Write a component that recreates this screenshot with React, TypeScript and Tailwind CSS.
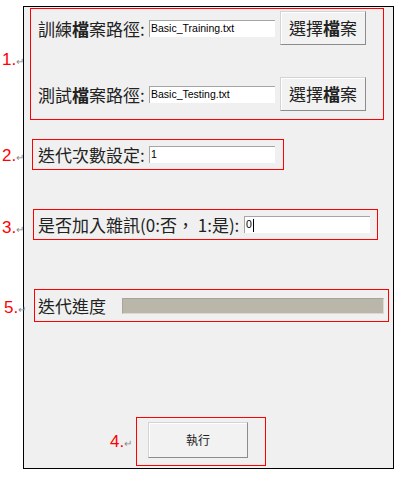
import React from 'react';

const cjk = "font-['Noto_Sans_CJK_TC','Noto_Sans_CJK_SC',sans-serif]";

function Note({ n, className }: { n: string; className: string }) {
  return (
    <div className={`absolute flex items-end font-['Liberation_Sans',sans-serif] ${className}`}>
      <span className="text-[17px] leading-none text-[#ff0000]">{n}</span>
      <span className="mb-[1px] text-[10px] leading-none text-[#8a8a8a]">↵</span>
    </div>
  );
}

function TextBox({ value, width, caret }: { value: string; width: string; caret?: boolean }) {
  return (
    <div
      className={`flex h-[17px] items-center border-t border-l border-[#a5a5a5] border-r-[#e8e8e8] border-b-[#e8e8e8] bg-white pl-[1px] font-['Liberation_Sans',sans-serif] text-[10.5px] text-black ${width}`}
    >
      <span>{value}</span>
      {caret && <span className="ml-[1px] h-[13px] w-[1px] bg-black" />}
    </div>
  );
}

function WinButton({ children, className }: { children: React.ReactNode; className: string }) {
  return (
    <button
      className={`flex items-center justify-center border border-[#d4d4d4] border-r-[#8c8c8c] border-b-[#8c8c8c] bg-[#f2f2f2] shadow-[inset_1px_1px_0_#ffffff] text-[#222] ${className}`}
    >
      {children}
    </button>
  );
}

export default function App() {
  return (
    <div className={`relative h-[479px] w-[402px] overflow-hidden bg-white ${cjk}`}>
      <div className="ml-[23px] mt-[6px] flex h-[463px] w-[371px] flex-col border border-black bg-[#f0f0f0]">
        {/* 1. 檔案路徑 */}
        <div className="ml-[6px] mt-[1px] flex h-[112px] w-[354px] flex-col border border-[#ff0000] pl-[7px] pt-[2px]">
          <div className="flex h-[34px] items-center">
            <span className="w-[111px] whitespace-nowrap text-[17px] leading-none text-[#222]">
              訓練<span className="font-semibold">檔</span>案路徑:
            </span>
            <TextBox value="Basic_Training.txt" width="w-[126px]" />
            <WinButton className="ml-[5px] h-[34px] w-[86px] text-[17px]">
              選擇<span className="font-semibold">檔</span>案
            </WinButton>
          </div>
          <div className="mt-[32px] flex h-[34px] items-center">
            <span className="w-[111px] whitespace-nowrap text-[17px] leading-none text-[#222]">
              測試<span className="font-semibold">檔</span>案路徑:
            </span>
            <TextBox value="Basic_Testing.txt" width="w-[126px]" />
            <WinButton className="ml-[5px] h-[34px] w-[86px] text-[17px]">
              選擇<span className="font-semibold">檔</span>案
            </WinButton>
          </div>
        </div>

        {/* 2. 迭代次數 */}
        <div className="ml-[8px] mt-[19px] flex h-[31px] w-[252px] items-center border border-[#ff0000] pl-[5px]">
          <span className="w-[111px] whitespace-nowrap text-[17px] leading-none text-[#222]">迭代次數設定:</span>
          <TextBox value="1" width="w-[126px]" />
        </div>

        {/* 3. 雜訊 */}
        <div className="ml-[9px] mt-[39px] flex h-[31px] w-[345px] items-center border border-[#ff0000] pl-[4px]">
          <span className="w-[206px] whitespace-nowrap text-[17px] leading-none text-[#222]">
            是否加入雜訊(0:否，&nbsp;1:是):
          </span>
          <TextBox value="0" width="w-[126px]" caret />
        </div>

        {/* 5. 進度 */}
        <div className="ml-[10px] mt-[49px] flex h-[33px] w-[355px] items-center border border-[#ff0000] pl-[3px]">
          <span className="w-[84px] whitespace-nowrap text-[17px] leading-none text-[#222]">迭代進度</span>
          <div className="h-[16px] w-[262px] border border-[#a8a498] border-r-[#dcd9d0] border-b-[#dcd9d0] bg-[#bab6aa]" />
        </div>

        {/* 4. 執行 */}
        <div className="ml-[112px] mt-[95px] h-[49px] w-[130px] border border-[#ff0000] pl-[11px] pt-[4px]">
          <WinButton className="h-[36px] w-[100px] text-[12px]">執行</WinButton>
        </div>
      </div>

      <Note n="1." className="left-[2px] top-[51px]" />
      <Note n="2." className="left-[2px] top-[147px]" />
      <Note n="3." className="left-[2px] top-[219px]" />
      <Note n="5." className="left-[4px] top-[299px]" />
      <Note n="4." className="left-[110px] top-[433px]" />
    </div>
  );
}
